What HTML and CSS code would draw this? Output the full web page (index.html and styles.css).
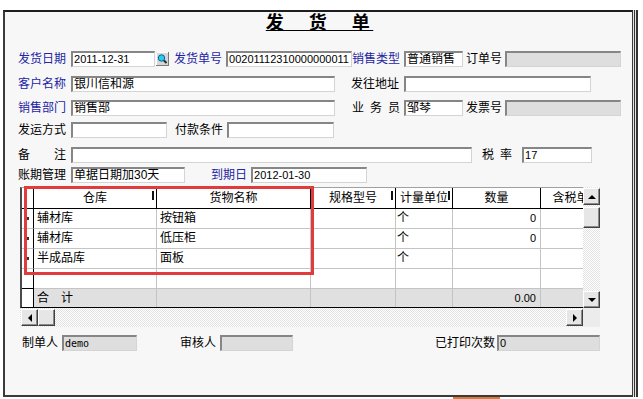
FILE: index.html
```html
<!DOCTYPE html>
<html lang="zh-CN">
<head>
	<meta charset="utf-8">
	<title>发货单</title>
	<link rel="stylesheet" href="styles.css">
</head>
<body>
	<div class="window">
		<h1 class="title"><span>发　货　单</span></h1>

		<div class="row r1">
			<span class="lbl blue">发货日期</span>
			<span class="box num f-date">2011-12-31</span>
			<span class="pick">
				<svg width="13" height="14" viewBox="0 0 13 14">
					<rect x="0.5" y="0.5" width="12" height="13" fill="#d6d6d6" stroke="#7a7a7a"/>
					<path d="M0.5 13V0.5H12" stroke="#fff" fill="none"/>
					<circle cx="5.5" cy="6" r="3.2" fill="#22d2ee" stroke="#1a5c9a"/>
					<path d="M8 8.5L10.5 11" stroke="#1c2a3a" stroke-width="2"/>
				</svg>
			</span>
			<span class="lbl blue l-billno">发货单号</span>
			<span class="box num f-billno">00201112310000000011</span>
			<span class="lbl blue">销售类型</span>
			<span class="box f-type">普通销售</span>
			<span class="lbl l-order">订单号</span>
			<span class="box off f-order"></span>
		</div>

		<div class="row r2">
			<span class="lbl blue">客户名称</span>
			<span class="box f-wide">银川信和源</span>
			<span class="lbl l-addr">发往地址</span>
			<span class="box f-addr"></span>
		</div>

		<div class="row r3">
			<span class="lbl blue">销售部门</span>
			<span class="box f-wide">销售部</span>
			<span class="lbl spaced l-staff">业务员</span>
			<span class="box f-type">邹琴</span>
			<span class="lbl l-order">发票号</span>
			<span class="box off f-order"></span>
		</div>

		<div class="row r4">
			<span class="lbl">发运方式</span>
			<span class="box f-ship"></span>
			<span class="lbl l-pay">付款条件</span>
			<span class="box f-pay"></span>
		</div>

		<div class="row r5">
			<span class="lbl">备　　注</span>
			<span class="box f-memo"></span>
			<span class="lbl spaced l-tax">税率</span>
			<span class="box num f-tax">17</span>
		</div>

		<div class="row r6">
			<span class="lbl">账期管理</span>
			<span class="box f-term">单据日期加30天</span>
			<span class="lbl blue l-due">到期日</span>
			<span class="box num f-due">2012-01-30</span>
		</div>

		<div class="grid">
			<div class="grid-top">
				<div class="sheet">
					<div class="tr head">
						<div class="ind"></div>
						<div class="mark">仓库</div>
						<div>货物名称</div>
						<div class="mark">规格型号</div>
						<div class="mark">计量单位</div>
						<div>数量</div>
						<div>含税单价</div>
					</div>
					<div class="tr">
						<div class="ind"><i class="ptr"></i></div>
						<div>辅材库</div>
						<div>按钮箱</div>
						<div></div>
						<div class="unit">个</div>
						<div class="n">0</div>
						<div></div>
					</div>
					<div class="tr">
						<div class="ind"><i class="ptr"></i></div>
						<div>辅材库</div>
						<div>低压柜</div>
						<div></div>
						<div class="unit">个</div>
						<div class="n">0</div>
						<div></div>
					</div>
					<div class="tr">
						<div class="ind"><i class="ptr"></i></div>
						<div>半成品库</div>
						<div>面板</div>
						<div></div>
						<div class="unit">个</div>
						<div class="n"></div>
						<div></div>
					</div>
					<div class="tr blank">
						<div class="ind"></div>
						<div></div>
						<div></div>
						<div></div>
						<div></div>
						<div></div>
						<div></div>
					</div>
					<div class="tr total">
						<div class="ind"></div>
						<div>合　计</div>
						<div></div>
						<div></div>
						<div></div>
						<div class="n">0.00</div>
						<div></div>
					</div>
				</div>
				<div class="vscroll">
					<div class="btn"><i class="arr up"></i></div>
					<div class="btn thumb-v"></div>
					<div class="btn down"><i class="arr dn"></i></div>
				</div>
			</div>
			<div class="grid-bottom">
				<div class="hscroll">
					<div class="btn"><i class="arr lt"></i></div>
					<div class="btn"></div>
					<div class="btn right"><i class="arr rt"></i></div>
				</div>
				<div class="corner"></div>
			</div>
			<div class="focus"></div>
		</div>

		<div class="row foot">
			<span class="lbl">制单人</span>
			<span class="box off mono f-maker">demo</span>
			<span class="lbl l-check">审核人</span>
			<span class="box off f-checker"></span>
			<span class="lbl l-prints">已打印次数</span>
			<span class="box off num f-prints">0</span>
		</div>
	</div>
	<div class="tab"></div>
</body>
</html>
```

FILE: styles.css
```css
*{
	margin: 0;
	padding: 0;
	box-sizing: border-box;
}

body{
	width: 643px;
	height: 399px;
	overflow: hidden;
	background: #fff;
	color: #000;
	font-family: "Liberation Sans", "Noto Sans CJK SC", sans-serif;
	font-size: 12px;
}

.window{
	margin: 10px 0 0 3px;
	width: 630px;
	height: 387px;
	background: #f7f7f7;
	border-top: 2px solid #1e1e1e;
	border-left: 2px solid #3a3a3a;
	border-bottom: 2px solid #3a3a3a;
	border-right: 1px solid #3a3a3a;
	box-shadow: 1px 0 0 #e6e6e6, 2px 0 0 #333, 3px 0 0 #e6e6e6, 5px 0 0 #333;
}

.title{
	height: 22px;
	padding-left: 2px;
	text-align: center;
	font-size: 18px;
	font-weight: bold;
	line-height: 22px;
	letter-spacing: 3.5px;
}

.title span{
	text-decoration: underline;
}

/* form rows */
.row{
	display: flex;
	align-items: center;
	height: 16px;
	padding-left: 13px;
}

.r1{ margin-top: 17px; }
.r2{ margin-top: 9px; }
.r3{ margin-top: 8px; }
.r4{ margin-top: 6px; }
.r5{ margin-top: 9px; }
.r6{ margin-top: 4px; }

.lbl{
	flex: none;
	line-height: 16px;
	white-space: nowrap;
}

.blue{
	color: #2424a4;
}

.spaced{
	letter-spacing: 6px;
}

.box{
	flex: none;
	height: 16px;
	margin-left: 4px;
	padding-left: 1px;
	background: #fff;
	border-style: solid;
	border-width: 2px 1px 1px 2px;
	border-color: #868686 #d4d4d4 #d4d4d4 #868686;
	line-height: 13px;
	white-space: nowrap;
	overflow: hidden;
}

.box.off{
	background: #dedede;
}

.num{
	font-size: 11px;
}

.mono{
	font-family: "DejaVu Sans Mono", monospace;
	font-size: 10px;
}

.pick{
	flex: none;
	display: flex;
	margin-left: 1px;
}

.f-date{ width: 84px; margin-left: 5px; }
.f-billno{ width: 126px; }
.f-type{ width: 59px; }
.f-order{ width: 116px; margin-left: 3px; }
.f-wide{ width: 264px; margin-left: 5px; }
.f-addr{ width: 187px; margin-left: 5px; }
.f-ship{ width: 96px; margin-left: 5px; }
.f-pay{ width: 107px; }
.f-memo{ width: 401px; margin-left: 5px; }
.f-tax{ width: 70px; }
.f-term{ width: 114px; margin-left: 5px; }
.f-due{ width: 116px; }

.l-billno{ margin-left: 5px; }
.l-order{ margin-left: 3px; }
.l-addr{ margin-left: 16px; }
.l-staff{ margin-left: 17px; width: 48px; }
.l-pay{ margin-left: 8px; }
.l-tax{ margin-left: 10px; width: 36px; }
.l-due{ margin-left: 26px; }

/* detail grid */
.grid{
	position: relative;
	margin: 4px 0 0 15px;
	width: 580px;
}

.grid-top,
.grid-bottom{
	display: flex;
}

.sheet{
	width: 563px;
	height: 121px;
	overflow: hidden;
	background: #fff;
	border-top: 1px solid #a0a0a0;
	border-left: 2px solid #4a4a4a;
	border-bottom: 1px solid #000;
}

.tr{
	display: grid;
	grid-template-columns: 12px 123px 154px 85px 57px 88px 72px;
	height: 20px;
}

.tr > div{
	padding-left: 3px;
	border-right: 1px solid #c4c4c4;
	border-bottom: 1px solid #c4c4c4;
	line-height: 19px;
	white-space: nowrap;
	overflow: hidden;
}

.tr > .ind{
	display: flex;
	align-items: center;
	padding-left: 5px;
	border-right-color: #000;
}

.tr > .unit{
	padding-left: 1px;
}

.tr > .n{
	padding-right: 4px;
	text-align: right;
	font-size: 11px;
}

.ptr{
	width: 2px;
	height: 3px;
	background: #333;
}

.tr.head{
	height: 21px;
}

.head > div{
	padding-left: 0;
	border-right-color: #000;
	border-bottom-color: #000;
	line-height: 20px;
	text-align: center;
}

.head > .mark{
	background: linear-gradient(#111, #111) no-repeat right 2px top 3px / 2px 9px;
}

.blank > .ind{
	border-bottom-color: #000;
}

.tr.total{
	height: 18px;
}

.total > div{
	background: #e0e0e0;
	border-bottom: none;
	line-height: 18px;
}

.total > .ind{
	background: #fff;
}

.vscroll,
.hscroll{
	display: flex;
	background: repeating-conic-gradient(#fff 0 25%, #e2e2e2 0 50%) 0 0 / 2px 2px;
}

.vscroll{
	flex-direction: column;
	width: 17px;
	height: 121px;
	padding-top: 1px;
}

.hscroll{
	width: 563px;
	height: 19px;
	padding: 1px 0 1px 1px;
}

.corner{
	width: 17px;
	height: 19px;
	background: #ececec;
}

.btn{
	display: flex;
	align-items: center;
	justify-content: center;
	flex: none;
	width: 17px;
	height: 17px;
	background: #e6e6e6;
	border: 1px solid;
	border-color: #fff #404040 #404040 #fff;
	box-shadow: inset -1px -1px #8a8a8a;
}

.thumb-v{
	height: 21px;
	margin-top: 2px;
}

.vscroll .down{
	margin-top: auto;
}

.hscroll .right{
	margin-left: auto;
}

.arr{
	width: 0;
	height: 0;
	border: 4px solid transparent;
}

.arr.up{ border-top: none; border-bottom-color: #000; }
.arr.dn{ border-bottom: none; border-top-color: #000; }
.arr.lt{ border-left: none; border-right-color: #000; }
.arr.rt{ border-right: none; border-left-color: #000; }

.focus{
	position: absolute;
	left: 4px;
	top: -1px;
	width: 290px;
	height: 89px;
	border: 3px solid #e23b3b;
}

/* footer */
.foot{
	margin-top: 8px;
	padding-left: 17px;
}

.f-maker{ width: 75px; }
.f-checker{ width: 73px; }
.f-prints{ width: 103px; margin-left: 2px; }

.l-check{ margin-left: 43px; }
.l-prints{ margin-left: 142px; }

.tab{
	margin-left: 453px;
	width: 47px;
	height: 2px;
	background: #d9793a;
}
```
